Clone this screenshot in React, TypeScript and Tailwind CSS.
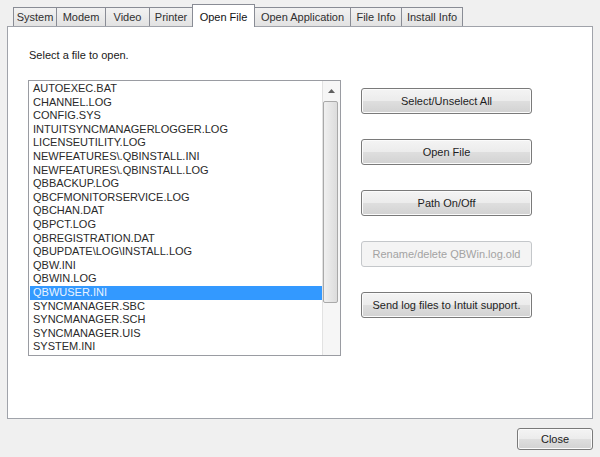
import React from "react";

const tabs = [
  { label: "System", w: 43 },
  { label: "Modem", w: 49 },
  { label: "Video", w: 44 },
  { label: "Printer", w: 43 },
  { label: "Open File", w: 62, active: true },
  { label: "Open Application", w: 96 },
  { label: "File Info", w: 51 },
  { label: "Install Info", w: 61 },
];

const files = [
  "AUTOEXEC.BAT",
  "CHANNEL.LOG",
  "CONFIG.SYS",
  "INTUITSYNCMANAGERLOGGER.LOG",
  "LICENSEUTILITY.LOG",
  "NEWFEATURES\\.QBINSTALL.INI",
  "NEWFEATURES\\.QBINSTALL.LOG",
  "QBBACKUP.LOG",
  "QBCFMONITORSERVICE.LOG",
  "QBCHAN.DAT",
  "QBPCT.LOG",
  "QBREGISTRATION.DAT",
  "QBUPDATE\\LOG\\INSTALL.LOG",
  "QBW.INI",
  "QBWIN.LOG",
  "QBWUSER.INI",
  "SYNCMANAGER.SBC",
  "SYNCMANAGER.SCH",
  "SYNCMANAGER.UIS",
  "SYSTEM.INI",
];

function Btn({ label, disabled }: { label: string; disabled?: boolean }) {
  if (disabled) {
    return (
      <div className="w-[171px] h-[26px] rounded-[3px] border border-[#c4c7ca] bg-[#f4f4f4] flex items-center justify-center text-[#a3a3a3]">
        {label}
      </div>
    );
  }
  return (
    <div className="w-[171px] h-[26px] rounded-[3px] border border-[#7a7a7a] bg-[linear-gradient(#f4f4f4_0%,#ececec_48%,#dedede_52%,#d2d2d2_100%)] shadow-[inset_0_0_0_1px_#fbfbfb] flex items-center justify-center text-[#1e1e1e]">
      {label}
    </div>
  );
}

export default function App() {
  return (
    <div
      className="w-[600px] h-[457px] bg-[#f0f0f0] text-[11px] text-[#202020] overflow-hidden"
      style={{ fontFamily: '"Liberation Sans", Arial, sans-serif' }}
    >
      {/* tab strip */}
      <div className="flex items-end h-[23px] mt-[4px] -mb-px pl-[13px] relative z-10">
        {tabs.map((t, i) =>
          t.active ? (
            <div
              key={t.label}
              className={`h-[23px] bg-white border-t border-l border-r border-[#898c95] flex items-start justify-center pt-[4px] text-[#111] ${i > 0 ? "-ml-px" : ""}`}
              style={{ width: t.w + 1 }}
            >
              {t.label}
            </div>
          ) : (
            <div
              key={t.label}
              className={`h-[19px] mb-px border-t border-l border-r border-[#898c95] bg-[linear-gradient(#f2f2f2,#e2e2e2)] flex items-center justify-center text-[#303030] ${i > 0 ? "-ml-px" : ""}`}
              style={{ width: t.w + 1 }}
            >
              {t.label}
            </div>
          )
        )}
      </div>

      {/* panel */}
      <div className="ml-[7px] w-[586px] h-[393px] border border-[#a0a3aa] bg-white flex">
        <div className="pl-[20px] pt-[22px] flex flex-col">
          <div className="h-[13px] leading-[13px] pl-px">Select a file to open.</div>
          <div className="mt-[18px] w-[313px] h-[276px] border border-[#9a9ca2] flex">
            <div className="flex-1 pt-px pl-px">
              {files.map((f) => (
                <div
                  key={f}
                  className={`h-[13.6px] leading-[13.6px] pl-[3px] whitespace-nowrap ${
                    f === "QBWUSER.INI" ? "bg-[#3399ff] text-[#eaf3ff]" : "text-[#2a2a2a]"
                  }`}
                >
                  {f}
                </div>
              ))}
            </div>
            {/* scrollbar */}
            <div className="w-[18px] h-full border-l border-[#e2e2e2] bg-[#f6f6f6] flex flex-col items-center">
              <div className="h-[20px] w-full flex items-center justify-center">
                <svg width="7" height="4" viewBox="0 0 7 4">
                  <path d="M0 4 L3.5 0 L7 4 Z" fill="#606060" />
                </svg>
              </div>
              <div className="w-[15px] h-[202px] rounded-[2px] border border-[#a9a9a9] bg-[linear-gradient(90deg,#f0f0f0,#dcdcdc)] -ml-[2px]" />
            </div>
          </div>
        </div>
        <div className="ml-[20px] pt-[61px] flex flex-col gap-[25px]">
          <Btn label="Select/Unselect All" />
          <Btn label="Open File" />
          <Btn label="Path On/Off" />
          <Btn label="Rename/delete QBWin.log.old" disabled />
          <Btn label="Send log files to Intuit support." />
        </div>
      </div>

      {/* bottom */}
      <div className="flex justify-end pr-[7px] mt-[9px]">
        <div className="w-[76px] h-[22px] rounded-[3px] border border-[#7a7a7a] bg-[linear-gradient(#f4f4f4_0%,#ececec_48%,#dedede_52%,#d2d2d2_100%)] shadow-[inset_0_0_0_1px_#fbfbfb] flex items-center justify-center">
          Close
        </div>
      </div>
    </div>
  );
}
